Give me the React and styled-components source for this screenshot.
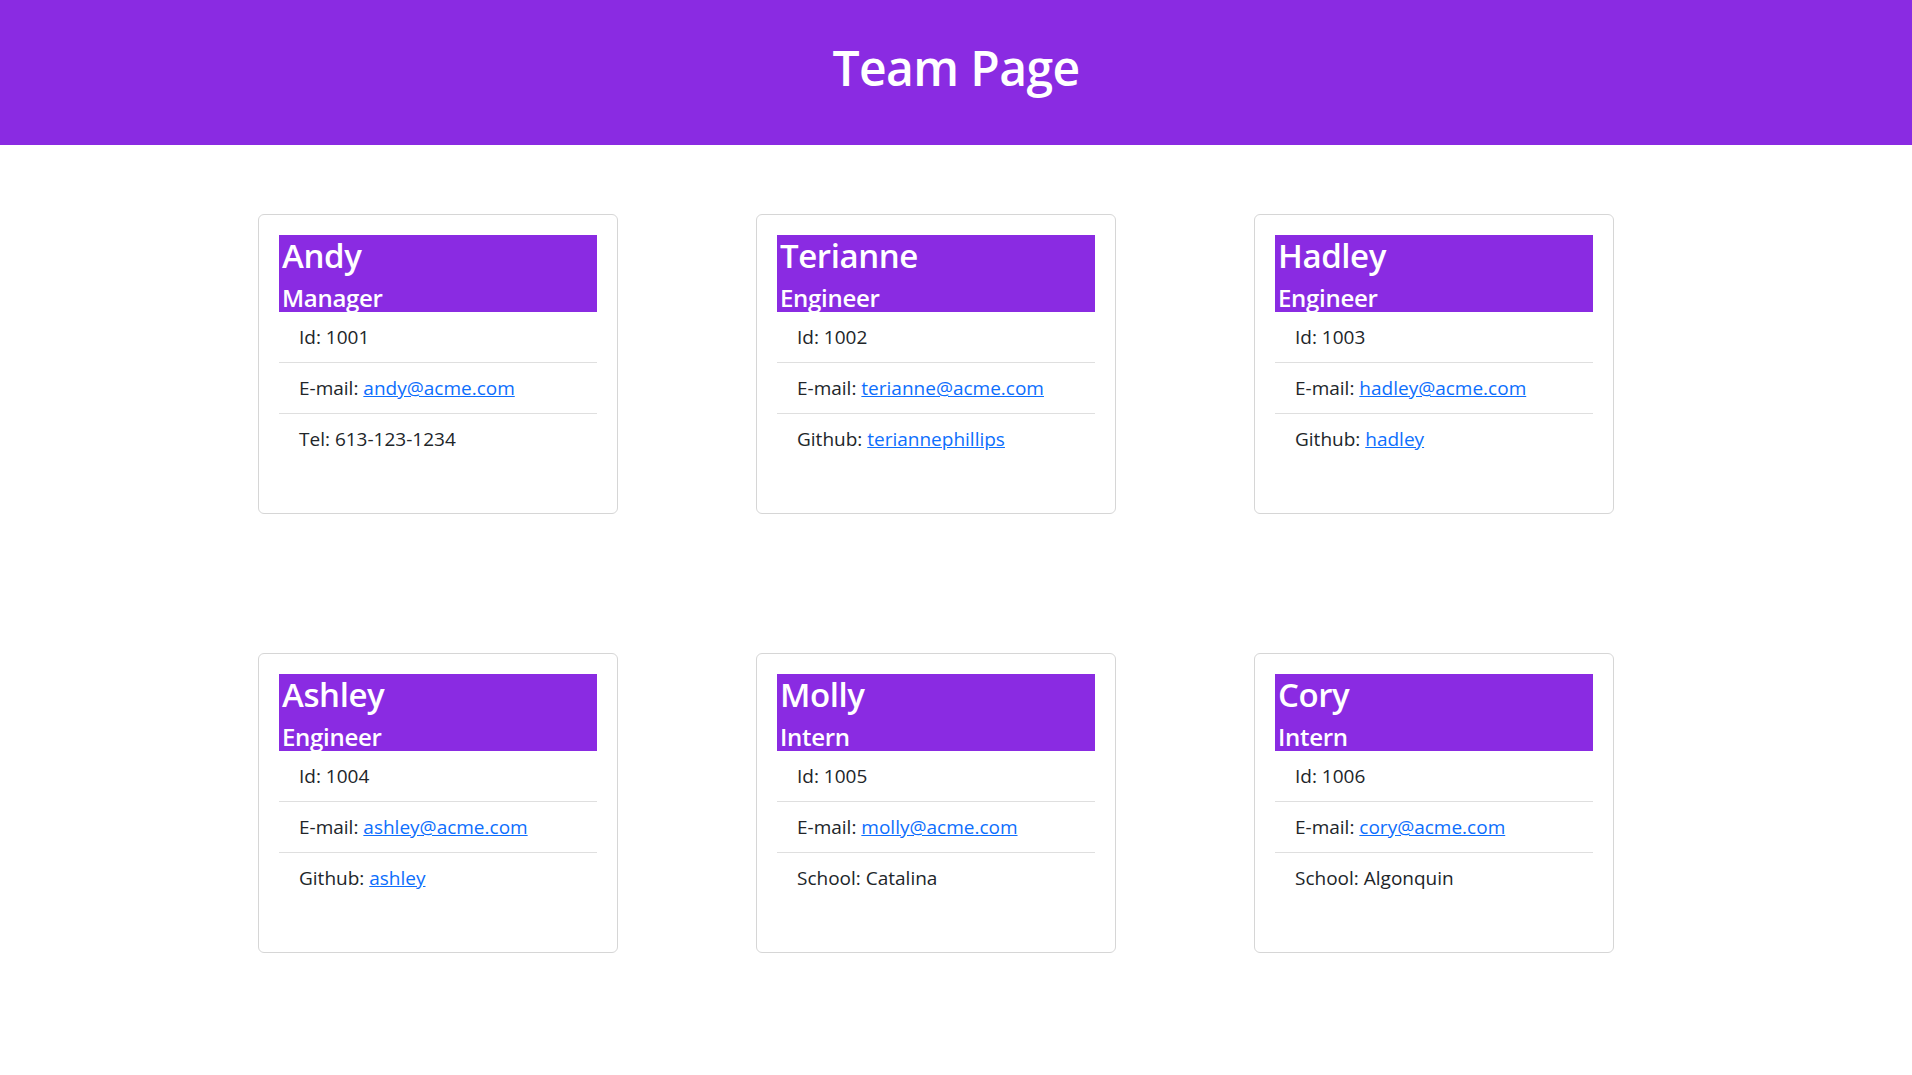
import React from "react";
import styled, { createGlobalStyle } from "styled-components";

const GlobalStyle = createGlobalStyle`
  body {
    margin: 0;
    background: #fff;
    color: #212529;
    font-family: "Open Sans", "Noto Sans", sans-serif;
  }
`;

const Banner = styled.header`
  box-sizing: border-box;
  height: 145px;
  padding-bottom: 10px;
  background: #8a2be2;
  display: flex;
  align-items: center;
  justify-content: center;
`;

const Title = styled.h1`
  margin: 0;
  color: #fff;
  font-size: 48px;
  font-weight: 600;
  line-height: 1.2;
  letter-spacing: -0.6px;
`;

const Board = styled.main`
  display: grid;
  grid-template-columns: repeat(3, 360px);
  column-gap: 138px;
  row-gap: 139px;
  padding: 69px 0 80px 258px;
`;

const Card = styled.section`
  box-sizing: border-box;
  height: 300px;
  border: 1px solid #d6d6d6;
  border-radius: 6px;
  padding: 20px;
  background: #fff;
`;

const CardHead = styled.div`
  background: #8a2be2;
  color: #fff;
  height: 77px;
  padding-left: 3px;
  display: flex;
  flex-direction: column;
`;

const Name = styled.h3`
  margin: 0 0 5px;
  font-size: 33px;
  font-weight: 600;
  line-height: 42px;
  letter-spacing: -0.4px;
`;

const Role = styled.h5`
  margin: 0;
  font-size: 24px;
  font-weight: 600;
  line-height: 31px;
  letter-spacing: -0.3px;
`;

const Details = styled.ul`
  list-style: none;
  margin: 0;
  padding: 0;
`;

const Item = styled.li`
  padding: 10px 20px;
  font-size: 19px;
  line-height: 30px;
  border-top: ${(p) => (p.$first ? "none" : "1px solid #dfdfdf")};
`;

const Link = styled.a`
  color: #0d6efd;
  text-decoration: underline;
`;

const team = [
  { name: "Andy", role: "Manager", id: 1001, email: "andy@acme.com", extra: { label: "Tel", value: "613-123-1234" } },
  { name: "Terianne", role: "Engineer", id: 1002, email: "terianne@acme.com", extra: { label: "Github", value: "teriannephillips", link: true } },
  { name: "Hadley", role: "Engineer", id: 1003, email: "hadley@acme.com", extra: { label: "Github", value: "hadley", link: true } },
  { name: "Ashley", role: "Engineer", id: 1004, email: "ashley@acme.com", extra: { label: "Github", value: "ashley", link: true } },
  { name: "Molly", role: "Intern", id: 1005, email: "molly@acme.com", extra: { label: "School", value: "Catalina" } },
  { name: "Cory", role: "Intern", id: 1006, email: "cory@acme.com", extra: { label: "School", value: "Algonquin" } },
];

const MemberCard = ({ member }) => (
  <Card>
    <CardHead>
      <Name>{member.name}</Name>
      <Role>{member.role}</Role>
    </CardHead>
    <Details>
      <Item $first>Id: {member.id}</Item>
      <Item>
        E-mail: <Link href={`mailto:${member.email}`}>{member.email}</Link>
      </Item>
      <Item>
        {member.extra.label}:{" "}
        {member.extra.link ? (
          <Link href={`https://github.com/${member.extra.value}`}>{member.extra.value}</Link>
        ) : (
          member.extra.value
        )}
      </Item>
    </Details>
  </Card>
);

export default function App() {
  return (
    <>
      <GlobalStyle />
      <Banner>
        <Title>Team Page</Title>
      </Banner>
      <Board>
        {team.map((m) => (
          <MemberCard key={m.id} member={m} />
        ))}
      </Board>
    </>
  );
}
